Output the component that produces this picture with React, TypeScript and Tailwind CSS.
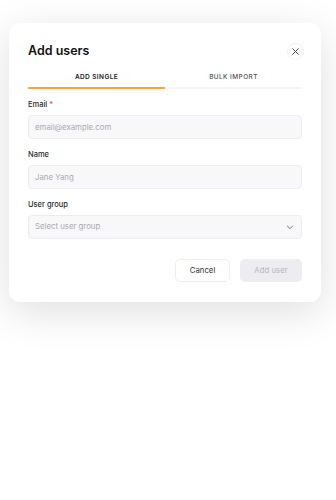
import React, { useState } from 'react';

const App: React.FC = () => {
  const [tab, setTab] = useState<'single' | 'bulk'>('single');

  return (
    <div className="min-h-[500px] w-[336px] bg-white pt-[23px] px-[9px] font-['Inter',sans-serif]">
      <div className="w-[312px] rounded-[11px] bg-white px-[19px] pt-[18px] pb-[20px] shadow-[0_10px_40px_rgba(0,0,0,0.13)]">
        {/* Header */}
        <div className="flex items-center justify-between h-[20px]">
          <h2 className="text-[12.5px] font-semibold text-[#111]">Add users</h2>
          <button className="w-[17px] h-[17px] rounded-full border border-[#f0f0f2] flex items-center justify-center text-[#444] mr-[-2px]">
            <svg width="7" height="7" viewBox="0 0 10 10" fill="none" stroke="currentColor" strokeWidth="1.4" strokeLinecap="round">
              <path d="M1 1L9 9M9 1L1 9" />
            </svg>
          </button>
        </div>

        {/* Tabs */}
        <div className="mt-[8px] flex border-b-2 border-[#f4f4f6]">
          <button
            onClick={() => setTab('single')}
            className={`flex-1 h-[20px] -mb-[2px] border-b-2 text-[6.5px] font-semibold tracking-[0.4px] uppercase ${tab === 'single' ? 'border-[#f5a93b] text-[#222]' : 'border-transparent text-[#555]'}`}
          >
            Add single
          </button>
          <button
            onClick={() => setTab('bulk')}
            className={`flex-1 h-[20px] -mb-[2px] border-b-2 text-[6.5px] font-medium tracking-[0.4px] uppercase ${tab === 'bulk' ? 'border-[#f5a93b] text-[#222]' : 'border-transparent text-[#555]'}`}
          >
            Bulk import
          </button>
        </div>

        {/* Fields */}
        <div className="mt-[10px] flex flex-col gap-[10px]">
          <div>
            <label className="block text-[7.5px] font-medium text-[#2a2a2a] leading-[12px]">
              Email <span className="text-[#e5484d]">*</span>
            </label>
            <input
              placeholder="email@example.com"
              className="mt-[4px] w-full h-[24px] rounded-[4px] border border-[#ededf0] bg-[#f8f8fa] px-[6px] text-[7.8px] text-[#333] placeholder:text-[#aaaab2] outline-none"
            />
          </div>
          <div>
            <label className="block text-[7.5px] font-medium text-[#2a2a2a] leading-[12px]">Name</label>
            <input
              placeholder="Jane Yang"
              className="mt-[4px] w-full h-[24px] rounded-[4px] border border-[#ededf0] bg-[#f8f8fa] px-[6px] text-[7.8px] text-[#333] placeholder:text-[#aaaab2] outline-none"
            />
          </div>
          <div>
            <label className="block text-[7.5px] font-medium text-[#2a2a2a] leading-[12px]">User group</label>
            <button className="mt-[4px] w-full h-[24px] rounded-[4px] border border-[#ededf0] bg-[#f8f8fa] pl-[6px] pr-[7px] flex items-center justify-between text-[7.8px] text-[#aaaab2]">
              <span>Select user group</span>
              <svg width="8" height="8" viewBox="0 0 12 12" fill="none" stroke="#555" strokeWidth="1.2" strokeLinecap="round" strokeLinejoin="round">
                <path d="M2 4.5L6 8.5L10 4.5" />
              </svg>
            </button>
          </div>
        </div>

        {/* Actions */}
        <div className="mt-[20px] flex justify-end gap-[10px]">
          <button className="w-[55px] h-[23px] rounded-[5px] border border-[#eeeef1] bg-white text-[7.8px] text-[#333]">
            Cancel
          </button>
          <button disabled className="w-[62px] h-[23px] rounded-[5px] bg-[#ededf1] text-[7.8px] text-[#b6b6be]">
            Add user
          </button>
        </div>
      </div>
    </div>
  );
};

export default App;
